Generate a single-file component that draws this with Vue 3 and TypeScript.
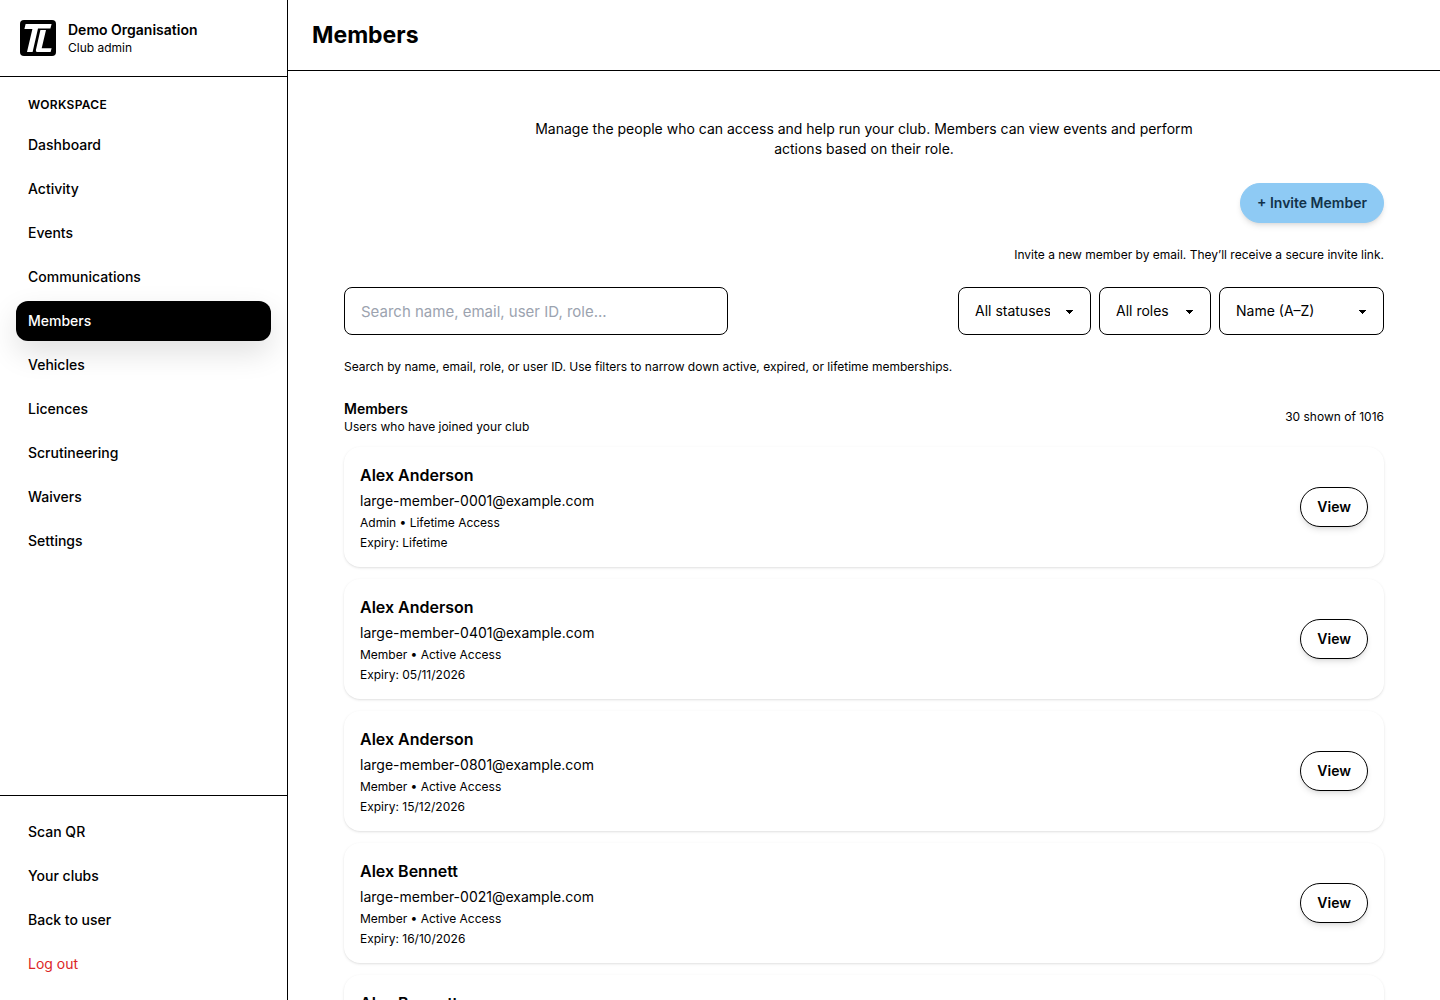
<script setup lang="ts">
import { computed, ref } from 'vue'

interface Member {
  name: string
  email: string
  role: string
  access: string
  expiry: string
}

const navItems: string[] = [
  'Dashboard',
  'Activity',
  'Events',
  'Communications',
  'Members',
  'Vehicles',
  'Licences',
  'Scrutineering',
  'Waivers',
  'Settings',
]
const footerItems: string[] = ['Scan QR', 'Your clubs', 'Back to user']
const currentItem = 'Members'
const totalMembers = 1016
const pageSize = 30

const members: Member[] = [
  { name: 'Alex Anderson', email: 'large-member-0001@example.com', role: 'Admin', access: 'Lifetime', expiry: 'Lifetime' },
  { name: 'Alex Anderson', email: 'large-member-0401@example.com', role: 'Member', access: 'Active', expiry: '05/11/2026' },
  { name: 'Alex Anderson', email: 'large-member-0801@example.com', role: 'Member', access: 'Active', expiry: '15/12/2026' },
  { name: 'Alex Bennett', email: 'large-member-0021@example.com', role: 'Member', access: 'Active', expiry: '16/10/2026' },
  { name: 'Alex Bennett', email: 'large-member-0421@example.com', role: 'Member', access: 'Active', expiry: '25/11/2026' },
]

const search = ref('')
const status = ref('all')
const role = ref('all')
const sort = ref('name-asc')

const visibleMembers = computed(() => {
  const term = search.value.trim().toLowerCase()
  const list = members.filter(
    (m) =>
      (!term || `${m.name} ${m.email} ${m.role}`.toLowerCase().includes(term)) &&
      (status.value === 'all' || m.access === status.value) &&
      (role.value === 'all' || m.role === role.value),
  )
  return sort.value === 'name-desc' ? list.reverse() : list
})
</script>

<template>
  <div class="shell">
    <aside class="sidebar">
      <div class="brand">
        <svg class="logo" viewBox="0 0 36 36" role="img" aria-label="Club logo">
          <rect width="36" height="36" rx="4" fill="#000" />
          <path d="M5.6 4H31.6L30.4 8.4H18L12.6 32H7L12.4 9H4.4Z" fill="#fff" />
          <path d="M20.4 10H26L21.7 28.2H31.6L30.6 32H17.2Q15.4 32 15.9 30Z" fill="#fff" />
        </svg>
        <div>
          <div class="brand-name">Demo Organisation</div>
          <div class="small">Club admin</div>
        </div>
      </div>
      <nav class="nav" aria-label="Workspace">
        <div class="nav-label">WORKSPACE</div>
        <a
          v-for="item in navItems"
          :key="item"
          href="#"
          class="nav-link"
          :class="{ active: item === currentItem }"
          :aria-current="item === currentItem ? 'page' : undefined"
          >{{ item }}</a
        >
      </nav>
      <div class="sidebar-footer">
        <a v-for="item in footerItems" :key="item" href="#" class="nav-link">{{ item }}</a>
        <button type="button" class="nav-link logout">Log out</button>
      </div>
    </aside>

    <div class="page">
      <header class="topbar">
        <h1>Members</h1>
      </header>
      <main class="content">
        <p class="intro">
          Manage the people who can access and help run your club. Members can view events and perform
          actions based on their role.
        </p>
        <div class="invite">
          <button type="button" class="pill primary">+ Invite Member</button>
          <p class="small">Invite a new member by email. They’ll receive a secure invite link.</p>
        </div>
        <div class="filters">
          <input
            v-model="search"
            class="field search"
            type="text"
            aria-label="Search members"
            placeholder="Search name, email, user ID, role..."
          />
          <div class="selects">
            <select v-model="status" class="field select status" aria-label="Status">
              <option value="all">All statuses</option>
              <option value="Active">Active</option>
              <option value="Expired">Expired</option>
              <option value="Lifetime">Lifetime</option>
            </select>
            <select v-model="role" class="field select role" aria-label="Role">
              <option value="all">All roles</option>
              <option value="Admin">Admin</option>
              <option value="Member">Member</option>
            </select>
            <select v-model="sort" class="field select sort" aria-label="Sort by">
              <option value="name-asc">Name (A–Z)</option>
              <option value="name-desc">Name (Z–A)</option>
            </select>
          </div>
        </div>
        <p class="small">
          Search by name, email, role, or user ID. Use filters to narrow down active, expired, or lifetime
          memberships.
        </p>
        <section class="list-section">
          <div class="list-head">
            <div>
              <h2>Members</h2>
              <p class="small">Users who have joined your club</p>
            </div>
            <p class="small">{{ pageSize }} shown of {{ totalMembers }}</p>
          </div>
          <ul class="cards">
            <li v-for="member in visibleMembers" :key="member.email" class="card">
              <div class="details">
                <h3>{{ member.name }}</h3>
                <p class="email">{{ member.email }}</p>
                <p class="small">{{ member.role }} • {{ member.access }} Access</p>
                <p class="small">Expiry: {{ member.expiry }}</p>
              </div>
              <button type="button" class="pill outline">View</button>
            </li>
          </ul>
        </section>
      </main>
    </div>
  </div>
</template>

<style>
body {
  margin: 0;
  background: #fff;
}
</style>

<style scoped>
.shell,
.shell * {
  box-sizing: border-box;
}
.shell {
  display: flex;
  height: 100vh;
  color: #000;
  font-family: Inter, 'Liberation Sans', sans-serif;
  font-size: 14px;
  line-height: 20px;
}
h1,
h2,
h3,
p,
ul {
  margin: 0;
  padding: 0;
}
button,
input,
select {
  margin: 0;
  font: inherit;
  color: inherit;
}
.small {
  font-size: 12px;
  line-height: 16px;
}

.sidebar {
  display: flex;
  flex-direction: column;
  flex: none;
  width: 288px;
  border-right: 1px solid #000;
}
.brand {
  display: flex;
  align-items: center;
  gap: 12px;
  padding: 20px;
  border-bottom: 1px solid #000;
}
.logo {
  width: 36px;
  height: 36px;
}
.brand-name {
  font-weight: 600;
}
.nav {
  display: flex;
  flex: 1;
  flex-direction: column;
  gap: 4px;
  min-height: 0;
  padding: 20px 16px;
  overflow-y: auto;
}
.nav-label {
  padding: 0 12px;
  margin-bottom: 8px;
  font-size: 12px;
  line-height: 16px;
  font-weight: 600;
  letter-spacing: 0.025em;
}
.nav-link {
  display: block;
  padding: 10px 12px;
  border-radius: 12px;
  color: #000;
  font-weight: 500;
  text-decoration: none;
}
.nav-link.active {
  background: #000;
  color: #fff;
  box-shadow: 0 12px 30px rgba(0, 0, 0, 0.12);
}
.sidebar-footer {
  display: flex;
  flex-direction: column;
  gap: 4px;
  padding: 16px;
  border-top: 1px solid #000;
}
.nav-link.logout {
  border: 0;
  background: none;
  color: #dc2626;
  font-weight: 400;
  text-align: left;
  cursor: pointer;
}

.page {
  display: flex;
  flex: 1;
  flex-direction: column;
  min-width: 0;
}
.topbar {
  display: flex;
  flex: none;
  align-items: center;
  min-height: 71px;
  padding: 0 24px;
  border-bottom: 1px solid #000;
}
h1 {
  font-size: 23px;
  line-height: 32px;
  font-weight: 700;
}
.content {
  display: flex;
  flex: 1;
  flex-direction: column;
  gap: 24px;
  min-height: 0;
  padding: 48px 56px;
  overflow-y: auto;
  scrollbar-width: none;
}
.intro {
  align-self: center;
  max-width: 672px;
  text-align: center;
}
.invite {
  display: flex;
  flex-direction: column;
  align-items: flex-end;
  gap: 24px;
}
.pill {
  flex: none;
  height: 40px;
  padding: 0 16px;
  border: 1px solid #000;
  border-radius: 20px;
  background: #fff;
  font-weight: 600;
  box-shadow: 0 4px 6px -1px rgba(0, 0, 0, 0.1), 0 2px 4px -2px rgba(0, 0, 0, 0.1);
  cursor: pointer;
}
.primary {
  border-color: #8ecaf4;
  background: #8ecaf4;
  color: #12324a;
}
.filters,
.selects,
.list-head,
.card {
  display: flex;
  align-items: center;
}
.filters,
.list-head,
.card {
  justify-content: space-between;
  gap: 16px;
}
.selects {
  gap: 8px;
}
.field {
  height: 48px;
  padding: 0 16px;
  border: 1px solid #000;
  border-radius: 8px;
  background-color: #fff;
}
.search {
  flex: 0 1 384px;
  min-width: 0;
  font-size: 15px;
}
.search::placeholder {
  color: #9ca3af;
  opacity: 1;
}
.select {
  padding-right: 40px;
  appearance: none;
  background-image: linear-gradient(45deg, transparent 50%, #000 50%),
    linear-gradient(135deg, #000 50%, transparent 50%);
  background-position: calc(100% - 20px) calc(50% + 1px), calc(100% - 16px) calc(50% + 1px);
  background-size: 4px 4px;
  background-repeat: no-repeat;
}
.status {
  width: 133px;
}
.role {
  width: 112px;
}
.sort {
  width: 165px;
}
.list-section {
  display: flex;
  flex-direction: column;
  gap: 12px;
}
h2 {
  font-size: 14px;
  line-height: 20px;
  font-weight: 600;
}
.cards {
  display: flex;
  flex-direction: column;
  gap: 12px;
  list-style: none;
}
.card {
  padding: 16px;
  border-radius: 16px;
  background: #fff;
  box-shadow: 0 1px 3px rgba(0, 0, 0, 0.1), 0 1px 2px -1px rgba(0, 0, 0, 0.1);
}
.details {
  display: flex;
  flex-direction: column;
  gap: 4px;
  min-width: 0;
}
h3 {
  font-size: 16px;
  line-height: 24px;
  font-weight: 600;
}
</style>
